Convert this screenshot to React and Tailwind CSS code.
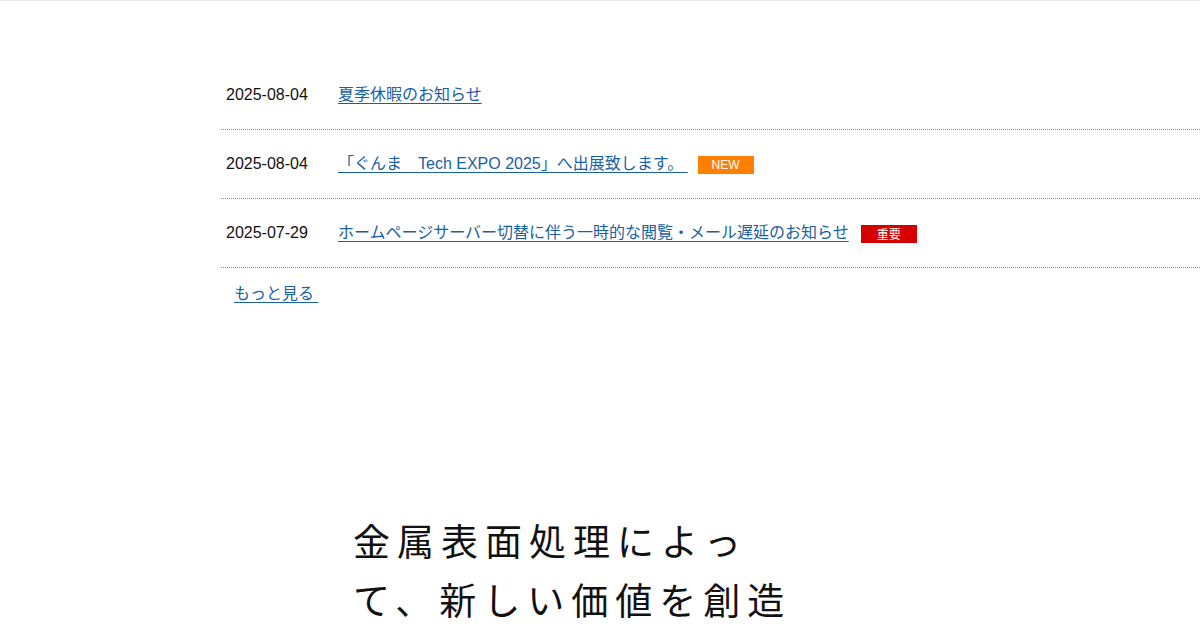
export default function App() {
  const rows = [
    { date: "2025-08-04", title: "夏季休暇のお知らせ", badge: null },
    { date: "2025-08-04", title: "「ぐんま　Tech EXPO 2025」へ出展致します。 ", badge: "new" },
    { date: "2025-07-29", title: "ホームページサーバー切替に伴う一時的な閲覧・メール遅延のお知らせ", badge: "imp" },
  ];
  return (
    <div className="w-[1200px] h-[632px] overflow-hidden bg-white" style={{ fontFamily: '"Liberation Sans", "Noto Sans CJK JP", sans-serif' }}>
      <div className="h-px bg-[#e2e5e5]" />
      <div className="ml-[221px] mt-[60px]">
        <ul>
          {rows.map((r, i) => (
            <li key={i} className="flex items-center h-[69px] border-b border-dotted border-[#8a8a8a] pl-[5px] text-[16px] leading-[22px]">
              <span className="w-[112px] shrink-0 text-[#111]">{r.date}</span>
              <a href="#" className="text-[#1a5fa3] underline underline-offset-[3px] whitespace-pre">{r.title}</a>
              {r.badge === "new" && (
                <span className="ml-[10px] inline-flex items-center justify-center w-[56px] h-[18px] mt-[2px] bg-[#ff8000] text-white text-[12px] leading-none">NEW</span>
              )}
              {r.badge === "imp" && (
                <span className="ml-[12px] inline-flex items-center justify-center w-[56px] h-[18px] mt-[2px] bg-[#d50000] text-white text-[12px] leading-none" style={{ fontFamily: '"Noto Sans CJK JP", sans-serif' }}>重要</span>
              )}
            </li>
          ))}
        </ul>
        <div className="mt-[15px] pl-[13px] text-[16px] leading-[22px]">
          <a href="#" className="text-[#1a5fa3] underline underline-offset-[3px]">もっと見る&nbsp;</a>
        </div>
      </div>
      <h2 className="ml-[353px] mt-[206px] text-[37px] leading-[59px] tracking-[7px] font-normal text-[#111]" style={{ fontFamily: '"Noto Sans CJK JP", sans-serif' }}>
        金属表面処理によっ<br />て、新しい価値を創造
      </h2>
    </div>
  );
}
